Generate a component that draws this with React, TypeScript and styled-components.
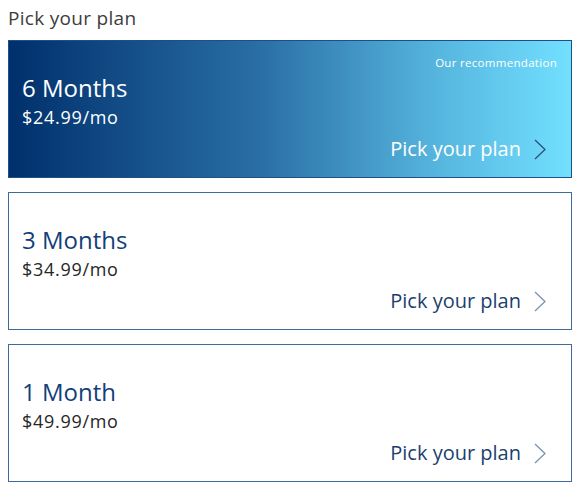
import React from "react";
import styled, { createGlobalStyle } from "styled-components";

const Global = createGlobalStyle`
  body {
    margin: 8px;
    background: #ffffff;
    font-family: "Open Sans", "Noto Sans", sans-serif;
  }
`;

const Page = styled.div`
  width: 564px;
  display: flex;
  flex-direction: column;
`;

const Heading = styled.h2`
  margin: 0 0 11px 0;
  font-size: 19px;
  line-height: 21px;
  letter-spacing: 0.3px;
  font-weight: 400;
  color: #3d3d3d;
`;

const List = styled.div`
  display: flex;
  flex-direction: column;
  gap: 14px;
`;

const Card = styled.div<{ $featured?: boolean }>`
  position: relative;
  box-sizing: border-box;
  height: 138px;
  display: flex;
  flex-direction: column;
  padding: 32px 25px 16px 13px;
  border: 1px solid ${(p) => (p.$featured ? "#1f4f87" : "#3f6a9e")};
  background: ${(p) =>
    p.$featured
      ? "linear-gradient(90deg, #00306c 0%, #2a6fa6 45%, #54b3dc 75%, #72e0ff 100%)"
      : "#ffffff"};
`;

const Badge = styled.span`
  position: absolute;
  top: 15px;
  right: 14px;
  font-size: 11.5px;
  line-height: 14px;
  letter-spacing: 0.3px;
  color: #ffffff;
`;

const Name = styled.div<{ $featured?: boolean }>`
  font-size: 24px;
  line-height: 29px;
  color: ${(p) => (p.$featured ? "#ffffff" : "#123f7a")};
`;

const Price = styled.div<{ $featured?: boolean }>`
  margin-top: 4px;
  font-size: 18px;
  line-height: 22px;
  letter-spacing: 0.7px;
  color: ${(p) => (p.$featured ? "#ffffff" : "#262626")};
`;

const Action = styled.button<{ $featured?: boolean }>`
  margin-top: auto;
  align-self: flex-end;
  display: flex;
  align-items: center;
  gap: 13px;
  padding: 0;
  border: none;
  background: none;
  font-family: inherit;
  font-size: 20px;
  line-height: 24px;
  color: ${(p) => (p.$featured ? "#ffffff" : "#1c3f6e")};
  cursor: pointer;
`;

const Chevron = ({ color }: { color: string }) => (
  <svg width="12" height="21" viewBox="0 0 12 21" fill="none">
    <path d="M1 1 L11 10.5 L1 20" stroke={color} strokeWidth="1.3" />
  </svg>
);

const plans = [
  { name: "6 Months", price: "$24.99/mo", featured: true },
  { name: "3 Months", price: "$34.99/mo", featured: false },
  { name: "1 Month", price: "$49.99/mo", featured: false },
];

export default function App() {
  return (
    <>
      <Global />
      <Page>
        <Heading>Pick your plan</Heading>
        <List>
          {plans.map((p) => (
            <Card key={p.name} $featured={p.featured}>
              {p.featured && <Badge>Our recommendation</Badge>}
              <Name $featured={p.featured}>{p.name}</Name>
              <Price $featured={p.featured}>{p.price}</Price>
              <Action $featured={p.featured}>
                Pick your plan
                <Chevron color={p.featured ? "#2d4f78" : "#7b93b3"} />
              </Action>
            </Card>
          ))}
        </List>
      </Page>
    </>
  );
}
